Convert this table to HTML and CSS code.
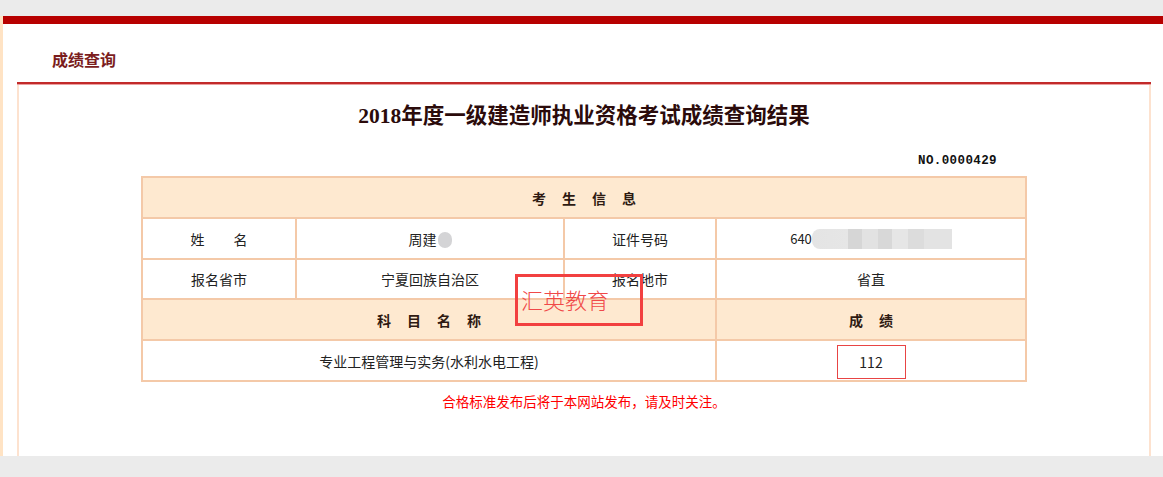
FILE: index.html
```html
<!DOCTYPE html>
<html lang="zh-CN">

<head>
  <meta charset="UTF-8" />
  <meta name="viewport" content="width=device-width, initial-scale=1.0" />
  <title>成绩查询</title>
  <link rel="stylesheet" href="styles.css">
</head>

<body>
  <div class="page">
    <div class="page-inner">
      <!-- Section title -->
      <div class="section-title">成绩查询</div>
      <div class="section-line"></div>

      <!-- Result box -->
      <div class="result-box">
        <h1 class="result-heading">2018年度一级建造师执业资格考试成绩查询结果</h1>
        <div class="result-no">NO.0000429</div>

        <table class="score-table">
          <colgroup>
            <col class="col-a">
            <col class="col-b">
            <col class="col-c">
            <col class="col-d">
          </colgroup>
          <tr class="head-row">
            <td colspan="4"><span class="spaced">考生信息</span></td>
          </tr>
          <tr>
            <td><span class="spaced-wide">姓名</span></td>
            <td>周建<span class="blur-dot"></span></td>
            <td>证件号码</td>
            <td><span class="id-start">640</span><span class="blur-bar"></span></td>
          </tr>
          <tr class="short-row">
            <td>报名省市</td>
            <td>宁夏回族自治区</td>
            <td>报名地市</td>
            <td>省直</td>
          </tr>
          <tr class="head-row">
            <td colspan="3"><span class="spaced">科目名称</span></td>
            <td><span class="spaced">成绩</span></td>
          </tr>
          <tr>
            <td colspan="3">专业工程管理与实务(水利水电工程)</td>
            <td><span class="score-box">112</span></td>
          </tr>
        </table>

        <p class="result-note">合格标准发布后将于本网站发布，请及时关注。</p>

        <!-- Watermark stamp -->
        <div class="watermark">汇英教育</div>
      </div>
    </div>
  </div>
</body>

</html>
```

FILE: styles.css
```css
* {
  margin: 0;
  padding: 0;
  box-sizing: border-box;
}

body {
  background-color: #ebebeb;
  font-family: 'Noto Sans CJK SC', sans-serif;
  font-size: 14px;
  color: #222;
}

.page {
  margin-top: 16px;
  height: 440px;
  padding-left: 3px;
  background-color: #ffe3c4;
  overflow: hidden;
}

.page-inner {
  height: 100%;
  background-color: #fff;
  border-top: 8px solid #b70000;
}

.section-title {
  height: 58px;
  padding: 25px 0 0 49px;
  font-size: 16px;
  line-height: 20px;
  font-weight: bold;
  color: #7b1d1d;
}

.section-line {
  margin: 0 12px 0 14px;
  height: 3px;
  border-top: 2px solid #c22a2a;
  border-bottom: 1px solid #eba0a0;
}

.result-box {
  position: relative;
  margin: 0 12px 0 14px;
  height: 400px;
  padding-top: 16px;
  border-left: 2px solid #fde2cf;
  border-right: 2px solid #fde2cf;
}

.result-heading {
  text-align: center;
  font-family: 'Liberation Serif', 'Noto Sans CJK SC', serif;
  font-size: 21.5px;
  line-height: 30px;
  font-weight: bold;
  color: #2b0b0b;
}

.result-no {
  width: 884px;
  margin: 22px auto 0;
  padding-right: 29px;
  text-align: right;
  font-family: 'Liberation Mono', monospace;
  font-size: 12.5px;
  line-height: 16px;
  font-weight: bold;
  letter-spacing: 0.4px;
  color: #111;
}

.score-table {
  width: 884px;
  margin: 7px auto 0;
  border-collapse: collapse;
  table-layout: fixed;
}

.col-a { width: 154px; }
.col-b { width: 268px; }
.col-c { width: 152px; }
.col-d { width: 310px; }

.score-table tr {
  height: 41px;
}

.score-table tr.short-row {
  height: 40px;
}

.score-table td {
  border: 2px solid #f4c9a8;
  text-align: center;
  vertical-align: middle;
  line-height: 20px;
  padding: 0;
}

.head-row td {
  background-color: #fee9d0;
  font-weight: bold;
  color: #2e1a12;
}

.spaced {
  letter-spacing: 16px;
  padding-left: 16px;
}

.spaced-wide {
  letter-spacing: 29px;
  padding-left: 29px;
}

.id-start {
  font-size: 13px;
}

.blur-dot {
  display: inline-block;
  width: 14px;
  height: 16px;
  margin-left: 1px;
  vertical-align: -3px;
  border-radius: 7px;
  background-color: #d4d4d6;
}

.blur-bar {
  display: inline-block;
  width: 140px;
  height: 20px;
  vertical-align: -5px;
  border-radius: 8px 0 0 8px;
  background: linear-gradient(90deg, #e4e4e4 0, #e6e6e6 36px, #d6d6d6 36px, #d6d6d6 50px, #e2e2e2 50px, #e2e2e2 66px, #d8d8d8 66px, #d8d8d8 80px, #e6e6e6 80px, #e6e6e6 96px, #dcdcdc 96px, #dcdcdc 112px, #e3e3e3 112px);
}

.score-box {
  display: inline-block;
  width: 69px;
  height: 34px;
  line-height: 32px;
  border: 1px solid #e84444;
  margin-top: 2px;
  color: #222;
}

.result-note {
  margin-top: 10px;
  text-align: center;
  font-size: 13.5px;
  line-height: 18px;
  color: #f00;
}

.watermark {
  position: absolute;
  left: 496px;
  top: 189px;
  width: 128px;
  height: 52px;
  padding: 12px 0 0 3px;
  border: 3px solid #f24040;
  font-family: 'Liberation Serif', 'Noto Sans CJK SC', serif;
  font-size: 22px;
  line-height: 26px;
  font-weight: 300;
  color: #f04848;
}
```
